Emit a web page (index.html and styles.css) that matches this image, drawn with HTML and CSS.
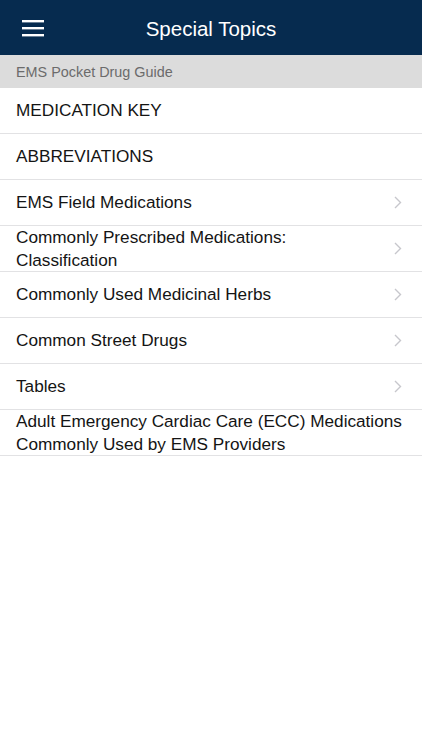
FILE: index.html
```html
<!DOCTYPE html>
<html lang="en">
<head>
<meta charset="utf-8">
<title>Special Topics</title>
<link rel="stylesheet" href="styles.css">
</head>
<body>
<header class="navbar">
  <button class="menu-btn" aria-label="Menu">
    <svg width="22" height="18" viewBox="0 0 22 18"><rect x="0" y="1" width="22" height="2.4" fill="#fff"/><rect x="0" y="8" width="22" height="2.4" fill="#fff"/><rect x="0" y="15" width="22" height="2.4" fill="#fff"/></svg>
  </button>
  <h1 class="title">Special Topics</h1>
</header>
<div class="section-header">EMS Pocket Drug Guide</div>
<ul class="list">
  <li class="row"><span class="label">MEDICATION KEY</span></li>
  <li class="row"><span class="label">ABBREVIATIONS</span></li>
  <li class="row"><span class="label">EMS Field Medications</span><svg class="chev" width="8" height="13" viewBox="0 0 8 13"><path d="M1 1l5.5 5.5L1 12" fill="none" stroke="#c7c7cc" stroke-width="1.4"/></svg></li>
  <li class="row"><span class="label">Commonly Prescribed Medications:<br>Classification</span><svg class="chev" width="8" height="13" viewBox="0 0 8 13"><path d="M1 1l5.5 5.5L1 12" fill="none" stroke="#c7c7cc" stroke-width="1.4"/></svg></li>
  <li class="row"><span class="label">Commonly Used Medicinal Herbs</span><svg class="chev" width="8" height="13" viewBox="0 0 8 13"><path d="M1 1l5.5 5.5L1 12" fill="none" stroke="#c7c7cc" stroke-width="1.4"/></svg></li>
  <li class="row"><span class="label">Common Street Drugs</span><svg class="chev" width="8" height="13" viewBox="0 0 8 13"><path d="M1 1l5.5 5.5L1 12" fill="none" stroke="#c7c7cc" stroke-width="1.4"/></svg></li>
  <li class="row"><span class="label">Tables</span><svg class="chev" width="8" height="13" viewBox="0 0 8 13"><path d="M1 1l5.5 5.5L1 12" fill="none" stroke="#c7c7cc" stroke-width="1.4"/></svg></li>
  <li class="row row-wide"><span class="label">Adult Emergency Cardiac Care (ECC) Medications<br>Commonly Used by EMS Providers</span></li>
</ul>
</body>
</html>
```
FILE: styles.css
```css
* { box-sizing: border-box; }
html, body { margin: 0; padding: 0; background: #fff; }
body { font-family: "Liberation Sans", Arial, sans-serif; color: #141414; }
.navbar {
  height: 55px;
  background: #062b4f;
  display: flex;
  align-items: center;
  justify-content: center;
  position: relative;
}
.menu-btn {
  position: absolute;
  left: 22px;
  top: 19px;
  background: none;
  border: 0;
  padding: 0;
  width: 22px;
  height: 18px;
  display: block;
}
.menu-btn svg { display: block; }
.title {
  margin: 2px 0 0 0;
  font-size: 20.5px;
  font-weight: normal;
  color: #fff;
}
.section-header {
  height: 33px;
  background: #dcdcdc;
  color: #6b6b6b;
  font-size: 14.4px;
  display: flex;
  align-items: center;
  padding-left: 16px;
}
.list { list-style: none; margin: 0; padding: 0; }
.row {
  height: 46px;
  border-bottom: 1px solid #e2e2e4;
  display: flex;
  align-items: center;
  justify-content: space-between;
  padding: 0 20px 0 16px;
  font-size: 17.2px;
  line-height: 23px;
}
.row-wide { padding-right: 0; white-space: nowrap; }
.chev { flex: none; }
```
